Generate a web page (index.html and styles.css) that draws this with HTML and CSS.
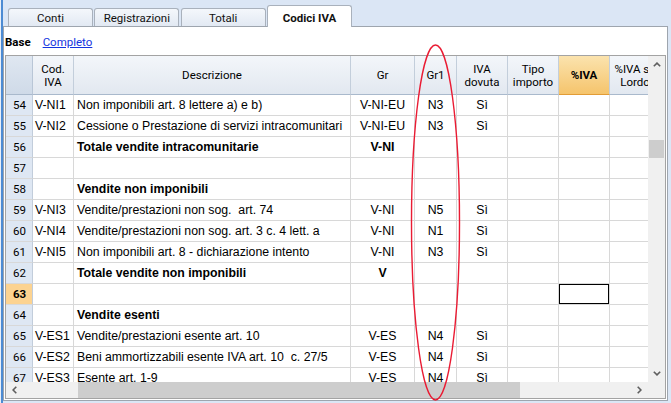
FILE: index.html
```html
<!DOCTYPE html>
<html lang="it">
<head>
<meta charset="utf-8">
<title>Codici IVA</title>
<link rel="stylesheet" href="styles.css">
</head>
<body>
<div class="app">
  <div class="tabs">
    <div class="tab">Conti</div>
    <div class="tab">Registrazioni</div>
    <div class="tab">Totali</div>
    <div class="tab active">Codici IVA</div>
  </div>
  <div class="panel">
    <div class="views"><span class="view-on">Base</span><a class="view-link" href="#">Completo</a></div>
    <div class="grid">
      <div class="cells">
        <div class="row head">
          <div class="h corner"></div>
          <div class="h">Cod.<br>IVA</div>
          <div class="h">Descrizione</div>
          <div class="h">Gr</div>
          <div class="h">Gr1</div>
          <div class="h">IVA<br>dovuta</div>
          <div class="h">Tipo<br>importo</div>
          <div class="h hot">%IVA</div>
          <div class="h">%IVA su<br>Lordo</div>
        </div>
        <div class="body">
          <div class="row"><div class="n">54</div><div class="c code">V-NI1</div><div class="c desc">Non imponibili art. 8 lettere a) e b)</div><div class="c mid">V-NI-EU</div><div class="c mid">N3</div><div class="c mid">Sì</div><div class="c"></div><div class="c"></div><div class="c"></div></div>
          <div class="row"><div class="n">55</div><div class="c code">V-NI2</div><div class="c desc">Cessione o Prestazione di servizi intracomunitari</div><div class="c mid">V-NI-EU</div><div class="c mid">N3</div><div class="c mid">Sì</div><div class="c"></div><div class="c"></div><div class="c"></div></div>
          <div class="row"><div class="n">56</div><div class="c code"></div><div class="c desc b">Totale vendite intracomunitarie</div><div class="c mid b">V-NI</div><div class="c mid"></div><div class="c mid"></div><div class="c"></div><div class="c"></div><div class="c"></div></div>
          <div class="row"><div class="n">57</div><div class="c code"></div><div class="c desc"></div><div class="c mid"></div><div class="c mid"></div><div class="c mid"></div><div class="c"></div><div class="c"></div><div class="c"></div></div>
          <div class="row"><div class="n">58</div><div class="c code"></div><div class="c desc b">Vendite non imponibili</div><div class="c mid"></div><div class="c mid"></div><div class="c mid"></div><div class="c"></div><div class="c"></div><div class="c"></div></div>
          <div class="row"><div class="n">59</div><div class="c code">V-NI3</div><div class="c desc">Vendite/prestazioni non sog.  art. 74</div><div class="c mid">V-NI</div><div class="c mid">N5</div><div class="c mid">Sì</div><div class="c"></div><div class="c"></div><div class="c"></div></div>
          <div class="row"><div class="n">60</div><div class="c code">V-NI4</div><div class="c desc">Vendite/prestazioni non sog. art. 3 c. 4 lett. a</div><div class="c mid">V-NI</div><div class="c mid">N1</div><div class="c mid">Sì</div><div class="c"></div><div class="c"></div><div class="c"></div></div>
          <div class="row"><div class="n">61</div><div class="c code">V-NI5</div><div class="c desc">Non imponibili art. 8 - dichiarazione intento</div><div class="c mid">V-NI</div><div class="c mid">N3</div><div class="c mid">Sì</div><div class="c"></div><div class="c"></div><div class="c"></div></div>
          <div class="row"><div class="n">62</div><div class="c code"></div><div class="c desc b">Totale vendite non imponibili</div><div class="c mid b">V</div><div class="c mid"></div><div class="c mid"></div><div class="c"></div><div class="c"></div><div class="c"></div></div>
          <div class="row"><div class="n cur">63</div><div class="c code"></div><div class="c desc"></div><div class="c mid"></div><div class="c mid"></div><div class="c mid"></div><div class="c"></div><div class="c sel"></div><div class="c"></div></div>
          <div class="row"><div class="n">64</div><div class="c code"></div><div class="c desc b">Vendite esenti</div><div class="c mid"></div><div class="c mid"></div><div class="c mid"></div><div class="c"></div><div class="c"></div><div class="c"></div></div>
          <div class="row"><div class="n">65</div><div class="c code">V-ES1</div><div class="c desc">Vendite/prestazioni esente art. 10</div><div class="c mid">V-ES</div><div class="c mid">N4</div><div class="c mid">Sì</div><div class="c"></div><div class="c"></div><div class="c"></div></div>
          <div class="row"><div class="n">66</div><div class="c code">V-ES2</div><div class="c desc">Beni ammortizzabili esente IVA art. 10  c. 27/5</div><div class="c mid">V-ES</div><div class="c mid">N4</div><div class="c mid">Sì</div><div class="c"></div><div class="c"></div><div class="c"></div></div>
          <div class="row"><div class="n">67</div><div class="c code">V-ES3</div><div class="c desc">Esente art. 1-9</div><div class="c mid">V-ES</div><div class="c mid">N4</div><div class="c mid">Sì</div><div class="c"></div><div class="c"></div><div class="c"></div></div>
        </div>
      </div>
      <div class="vscroll">
        <div class="sbtn"><svg width="8" height="5" viewBox="0 0 8 5"><polyline points="0.8,4.3 4,1.1 7.2,4.3" /></svg></div>
        <div class="vtrack"><div class="vthumb"></div></div>
        <div class="sbtn"><svg width="8" height="5" viewBox="0 0 8 5"><polyline points="0.8,0.7 4,3.9 7.2,0.7" /></svg></div>
      </div>
      <div class="hscroll">
        <div class="sbtn"><svg width="5" height="8" viewBox="0 0 5 8"><polyline points="4.3,0.8 1.1,4 4.3,7.2" /></svg></div>
        <div class="htrack"><div class="hthumb"></div></div>
        <div class="sbtn"><svg width="5" height="8" viewBox="0 0 5 8"><polyline points="0.7,0.8 3.9,4 0.7,7.2" /></svg></div>
        <div class="corner-box"></div>
      </div>
    </div>
  </div>
  <svg class="mark" width="671" height="403" viewBox="0 0 671 403"><ellipse cx="435.5" cy="222.5" rx="24" ry="177.5" /></svg>
</div>
</body>
</html>
```
FILE: styles.css
```css
* { box-sizing: border-box; margin: 0; padding: 0; }
html, body { width: 671px; height: 403px; overflow: hidden; }
body {
  background: #dbe6f5;
  font-family: Roboto, "Open Sans", sans-serif;
  font-size: 11.5px;
  color: #000;
}
.app {
  position: relative;
  width: 671px;
  height: 403px;
  box-shadow: inset 1px 0 0 #e8eff9, inset 3px 0 0 #4c8bd3;
}
.tabs {
  display: flex;
  align-items: flex-end;
  height: 26px;
  padding-left: 8px;
  gap: 1.33px;
}
.tab {
  width: 85px;
  height: 18px;
  border: 1px solid #a9b1bc;
  border-bottom: 0;
  border-radius: 3px 3px 0 0;
  background: linear-gradient(#f4f7fb, #e2e9f3);
  display: flex;
  align-items: center;
  justify-content: center;
  padding-top: 1px;
  color: #111;
}
.tab.active {
  height: 22px;
  background: #fff;
  font-weight: 700;
  margin-bottom: -1px;
  position: relative;
  z-index: 1;
  padding-top: 3px;
}
.panel {
  margin-left: 3px;
  width: 665px;
  height: 375px;
  background: #fff;
  border: 1px solid #9ea5ae;
  padding: 0 1px;
}
.views {
  height: 28px;
  display: flex;
  align-items: center;
  gap: 12px;
  padding-top: 1px;
}
.view-on { font-weight: 700; }
.view-link { color: #1434e0; text-decoration: underline; }
.grid {
  width: 661px;
  height: 344px;
  border: 1px solid #a3a3a3;
  display: grid;
  grid-template-columns: 642px 17px;
  grid-template-rows: 326px 16px;
}
.cells { overflow: hidden; }
.row {
  display: grid;
  grid-template-columns: 27px 41px 277px 64px 42px 51px 51px 51px 51px;
  width: 655px;
}
.h {
  height: 39px;
  display: flex;
  align-items: center;
  justify-content: center;
  text-align: center;
  line-height: 13.5px;
  padding-top: 2px;
  background: linear-gradient(#f3f6fa, #e2e8f0);
  border-right: 1px solid #c3cedb;
  border-bottom: 1px solid #a9b9cc;
  white-space: nowrap;
  overflow: hidden;
}
.h.corner { background: linear-gradient(#dfe7f1, #cfdae8); border-right-color: #b9c6d6; }
.h.hot {
  background: linear-gradient(#fbe3ae, #f5c46c);
  border-bottom-color: #e29c36;
  font-weight: 700;
}
.body { font-family: "Liberation Sans", Arial, sans-serif; font-size: 12.3px; }
.n, .c {
  height: 21px;
  display: flex;
  align-items: center;
  border-right: 1px solid #d8d8d8;
  border-bottom: 1px solid #d8d8d8;
  white-space: pre;
  overflow: hidden;
}
.n {
  justify-content: center;
  background: #dee7f3;
  border-right-color: #c2cddb;
  font-family: Roboto, "Open Sans", sans-serif;
  font-size: 11.5px;
  padding-left: 1px;
}
.n.cur { background: #fcd391; font-weight: 700; }
.code { padding-left: 2px; }
.desc { padding-left: 3px; }
.mid { justify-content: center; }
.b { font-weight: 700; }
.sel { box-shadow: inset 0 0 0 1px #000; }
.vscroll {
  background: #f0f0f0;
  display: flex;
  flex-direction: column;
  grid-row: 1;
  grid-column: 2;
}
.sbtn {
  flex: 0 0 17px;
  width: 17px;
  height: 17px;
  display: flex;
  align-items: center;
  justify-content: center;
}
.hscroll .sbtn { height: 16px; }
.sbtn polyline { fill: none; stroke: #5f5f5f; stroke-width: 1.6; }
.vtrack { flex: 1; padding-top: 67px; }
.vthumb { width: 15px; height: 18px; margin-left: 1px; background: #cdcdcd; }
.hscroll {
  grid-column: 1 / 3;
  grid-row: 2;
  background: #f0f0f0;
  display: flex;
}
.htrack { flex: 1; padding-left: 55px; }
.hthumb { width: 442px; height: 16px; background: #cdcdcd; }
.corner-box { flex: 0 0 17px; }
.mark { position: absolute; left: 0; top: 0; pointer-events: none; }
.mark ellipse { fill: none; stroke: #ea1b33; stroke-width: 1.4; }
```
